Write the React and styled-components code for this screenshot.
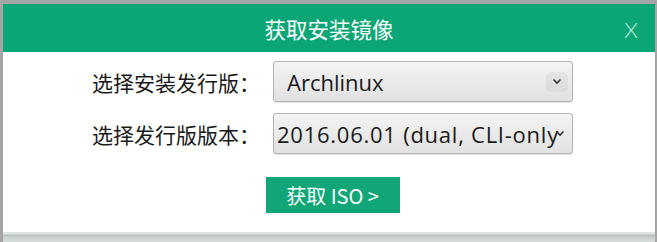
import React from "react";
import styled, { createGlobalStyle } from "styled-components";

const Global = createGlobalStyle`
  html, body { margin: 0; padding: 0; background: #a4a6a5; }
  body { width: 657px; height: 242px; overflow: hidden; font-family: "Noto Sans", "Noto Sans CJK SC", sans-serif; }
`;

const Page = styled.div`
  display: flex;
  flex-direction: column;
  padding: 4px 2px 0 3px;
  height: 242px;
  box-sizing: border-box;
`;

const Dialog = styled.div`
  background: #fff;
  display: flex;
  flex-direction: column;
`;

const Header = styled.div`
  height: 48px;
  background: #0ba676;
  border-top: 1px solid #0e9e70;
  box-sizing: border-box;
  display: flex;
  align-items: center;
  justify-content: center;
  position: relative;
  color: #fff;
  font-family: "Noto Sans CJK SC", "Noto Sans", sans-serif;
  font-size: 21.5px;
`;

const Close = styled.span`
  position: absolute;
  right: 17px;
  top: 11px;
  font-family: "Lato", "Open Sans", sans-serif;
  font-weight: 300;
  font-size: 22px;
  color: rgba(230, 255, 242, 0.85);
`;

const Body = styled.div`
  height: 180px;
  box-sizing: border-box;
  padding-top: 9px;
  display: flex;
  flex-direction: column;
  align-items: center;
  padding-left: 7px;
`;

const Form = styled.div`
  display: grid;
  grid-template-columns: auto 300px;
  column-gap: 13px;
  row-gap: 11px;
  align-items: center;
`;

const Label = styled.label`
  font-family: "Noto Sans CJK SC", sans-serif;
  font-size: 21px;
  color: #1a1a1a;
  text-align: right;
  white-space: nowrap;
`;

const Select = styled.div`
  height: 41px;
  box-sizing: border-box;
  border: 1px solid #b4b4b4;
  border-radius: 3px;
  background: linear-gradient(#f4f4f4, #e1e1e1);
  box-shadow: 0 1px 1px rgba(0,0,0,0.12);
  display: flex;
  align-items: center;
  padding-left: ${(p) => (p.$tight ? "3px" : "13px")};
  position: relative;
  overflow: hidden;
  font-family: "Open Sans", "Noto Sans", sans-serif;
  font-size: 22px;
  letter-spacing: ${(p) => (p.$tight ? "0.75px" : "0")};
  color: #1a1a1a;
  white-space: nowrap;
`;

const SelectText = styled.span`
  flex: 1;
  overflow: hidden;
  white-space: nowrap;
`;

const Chevron = styled.span`
  width: 22px;
  height: 20px;
  margin-right: ${(p) => (p.$boxed ? "4px" : "1px")};
  margin-left: ${(p) => (p.$boxed ? "0" : "-10px")};
  flex: none;
  display: flex;
  align-items: center;
  justify-content: center;
  border-radius: 5px;
  background: ${(p) => (p.$boxed ? "rgba(0,0,0,0.045)" : "transparent")};
`;

const Button = styled.button`
  margin-top: 23px;
  width: 134px;
  height: 36px;
  border: none;
  background: #10a677;
  color: #fff;
  font-family: "Noto Sans CJK SC", "Noto Sans", sans-serif;
  font-size: 20px;
  padding: 0;
`;

const Footer = styled.div`
  height: 10px;
  background: linear-gradient(#dfe6e2 0, #dfe6e2 2px, #b2bcb7 3px, #c9d2cd 5px, #d6ddd9 10px);
`;

const ChevronIcon = () => (
  <svg width="10" height="7" viewBox="0 0 10 7">
    <path d="M1.5 1.5 L5 5 L8.5 1.5" fill="none" stroke="#333" strokeWidth="1.6" />
  </svg>
);

export default function App() {
  return (
    <>
      <Global />
      <Page>
        <Dialog>
          <Header>
            获取安装镜像
            <Close>X</Close>
          </Header>
          <Body>
            <Form>
              <Label>选择安装发行版：</Label>
              <Select>
                <SelectText>Archlinux</SelectText>
                <Chevron $boxed>
                  <ChevronIcon />
                </Chevron>
              </Select>
              <Label>选择发行版版本：</Label>
              <Select $tight>
                <SelectText>2016.06.01 (dual, CLI-only)</SelectText>
                <Chevron>
                  <ChevronIcon />
                </Chevron>
              </Select>
            </Form>
            <Button>获取 ISO &gt;</Button>
          </Body>
        </Dialog>
        <Footer />
      </Page>
    </>
  );
}
